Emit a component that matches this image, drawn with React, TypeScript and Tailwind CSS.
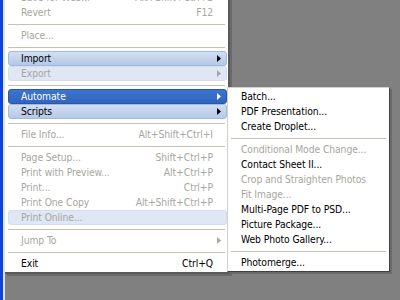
import React from 'react';

type Item =
  | { sep: true }
  | {
      sep?: false;
      label: string;
      shortcut?: string;
      disabled?: boolean;
      arrow?: boolean;
      hl?: 'light' | 'pale' | 'active';
    };

const mainItems: Item[] = [
  { label: 'Save for Web...', shortcut: 'Alt+Shift+Ctrl+S', disabled: true },
  { label: 'Revert', shortcut: 'F12', disabled: true },
  { sep: true },
  { label: 'Place...', disabled: true },
  { sep: true },
  { label: 'Import', arrow: true, hl: 'light' },
  { label: 'Export', arrow: true, disabled: true, hl: 'pale' },
  { sep: true },
  { label: 'Automate', arrow: true, hl: 'active' },
  { label: 'Scripts', arrow: true, hl: 'light' },
  { sep: true },
  { label: 'File Info...', shortcut: 'Alt+Shift+Ctrl+I', disabled: true },
  { sep: true },
  { label: 'Page Setup...', shortcut: 'Shift+Ctrl+P', disabled: true },
  { label: 'Print with Preview...', shortcut: 'Alt+Ctrl+P', disabled: true },
  { label: 'Print...', shortcut: 'Ctrl+P', disabled: true },
  { label: 'Print One Copy', shortcut: 'Alt+Shift+Ctrl+P', disabled: true },
  { label: 'Print Online...', disabled: true, hl: 'pale' },
  { sep: true },
  { label: 'Jump To', arrow: true, disabled: true },
  { sep: true },
  { label: 'Exit', shortcut: 'Ctrl+Q' },
];

const subItems: Item[] = [
  { label: 'Batch...' },
  { label: 'PDF Presentation...' },
  { label: 'Create Droplet...' },
  { sep: true },
  { label: 'Conditional Mode Change...', disabled: true },
  { label: 'Contact Sheet II...' },
  { label: 'Crop and Straighten Photos', disabled: true },
  { label: 'Fit Image...', disabled: true },
  { label: 'Multi-Page PDF to PSD...' },
  { label: 'Picture Package...' },
  { label: 'Web Photo Gallery...' },
  { sep: true },
  { label: 'Photomerge...' },
];

const hlClass = {
  light: 'bg-gradient-to-b from-[#d3dff2] to-[#b4c8e8] border border-[#a3b8dc] rounded-[3px]',
  pale: 'bg-[#dfe7f4] border border-[#d2ddef] rounded-[3px]',
  active: 'bg-gradient-to-b from-[#3d74cc] to-[#2f65c0] border border-[#2856a8] rounded-[3px]',
};

function Arrow({ color }: { color: string }) {
  return (
    <svg width="4" height="7" viewBox="0 0 4 7" className="shrink-0">
      <path d="M0 0 L4 3.5 L0 7 Z" fill={color} />
    </svg>
  );
}

function Row({ item, sub }: { item: Item; sub?: boolean }) {
  if (item.sep) {
    return (
      <div className="h-[8px] flex items-center">
        <div className="h-px w-full mx-[2px] bg-[#c4c1b4]" />
      </div>
    );
  }
  const active = item.hl === 'active';
  const text = active ? 'text-white' : item.disabled ? 'text-[#a7a6a0]' : 'text-black';
  return (
    <div
      className={`h-[15px] flex items-center ${sub ? 'pl-[11px] pr-4' : 'ml-[2px] pl-[12px] pr-[5px]'} ${
        item.hl ? hlClass[item.hl] : 'border border-transparent'
      } ${text}`}
    >
      <span className="flex-1 whitespace-nowrap">{item.label}</span>
      {item.shortcut && <span className="whitespace-nowrap mr-[8px]">{item.shortcut}</span>}
      {item.arrow && (
        <Arrow color={active ? '#ffffff' : item.disabled ? '#a7a6a0' : '#000000'} />
      )}
    </div>
  );
}

export default function App() {
  return (
    <div
      className="relative w-[400px] h-[300px] overflow-hidden bg-[#808080] flex leading-none tracking-[-0.1px]"
      style={{ fontFamily: 'Tahoma, "DejaVu Sans Condensed", "DejaVu Sans", sans-serif', fontSize: '10.3px' }}
    >
      <div className="w-[3px] h-full bg-[#0a44dc]" />
      <div className="w-[2px] h-full bg-[#dfe3ea]" />
      <div className="self-start -mt-[10px] w-[225px] bg-white border-r-2 border-b-2 border-[#5a5a5a] shadow-[2px_2px_0_#6a6a6a] pt-0 pb-[1px] px-[1px]">
        {mainItems.map((it, i) => (
          <Row key={i} item={it} />
        ))}
      </div>
      <div className="absolute left-[227px] top-[87px] w-[163px] bg-white border border-l-[#d4d0c8] border-t-[#d4d0c8] border-r-[#404040] border-b-[#404040] shadow-[2px_2px_0_#6a6a6a] p-[1px]">
        {subItems.map((it, i) => (
          <Row key={i} item={it} sub />
        ))}
      </div>
    </div>
  );
}
